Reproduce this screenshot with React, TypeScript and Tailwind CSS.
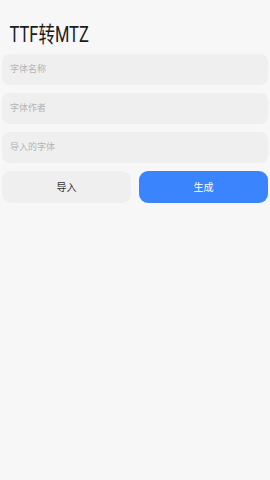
export default function App(){

const fields = ["字体名称","字体作者","导入的字体"]

return(

<div className="min-h-[480px] w-full bg-[#f7f7f7] px-[2px] pt-[21px]" style={{fontFamily:'Roboto, "Noto Sans CJK SC", sans-serif'}}>

<h1 className="origin-left scale-x-[0.75] pl-[10px] text-[22px] leading-[28px] text-[#1a1a1a]">TTF转MTZ</h1>

<div className="mt-[5px] flex flex-col gap-[8px]">

{fields.map((f,i)=>(
<div key={i} className="flex h-[31px] items-center rounded-[8px] bg-[#efefef] px-[8px] text-[9px] text-[#b4b4b4]">
{f}
</div>
))}

<div className="grid grid-cols-2 gap-[8px]">
<button className="h-[32px] rounded-[9px] bg-[#efefef] text-[10px] text-[#333]">导入</button>
<button className="h-[32px] rounded-[9px] bg-[#3a84fe] text-[10px] text-white">生成</button>
</div>

</div>

</div>

)

}
